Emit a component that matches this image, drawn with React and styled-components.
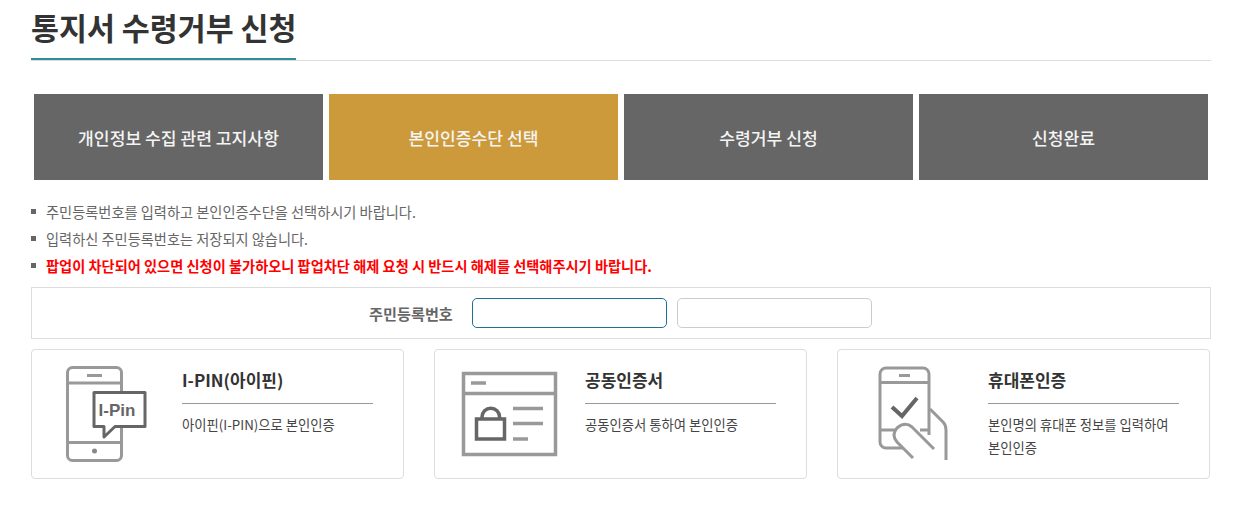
import styled, { createGlobalStyle } from 'styled-components';

const GlobalStyle = createGlobalStyle`
  html, body {
    margin: 0;
    padding: 0;
    background: #fff;
    font-family: "Noto Sans CJK KR", "Noto Sans", sans-serif;
  }
  * {
    box-sizing: border-box;
  }
`;

const Page = styled.div`
  width: 1249px;
  height: 507px;
  padding: 0 38px 0 31px;
  overflow: hidden;
`;
const Title = styled.div`
  height: 61px;
  border-bottom: 1px solid #ddd;
  h1 {
    display: inline-block;
    margin: 0;
    height: 60px;
    padding-top: 5px;
    border-bottom: 2px solid #2f8f96;
    font-size: 30.4px;
    line-height: 44px;
    font-weight: 700;
    color: #333;
  }
`;
const Steps = styled.ul`
  display: flex;
  gap: 6px;
  margin: 33px 0 0;
  padding: 0 0 0 3px;
  list-style: none;
`;
const Step = styled.li`
  width: 289px;
  height: 86px;
  display: flex;
  align-items: center;
  justify-content: center;
  background: ${props => (props.active ? '#cc9a3a' : '#666')};
  color: #f4f4f4;
  font-size: 17.15px;
  font-weight: 500;
`;
const Notices = styled.ul`
  margin: 18px 0 0;
  padding: 0;
  list-style: none;
`;
const Notice = styled.li`
  display: flex;
  align-items: center;
  height: 27px;
  font-size: 14.23px;
  color: ${props => (props.warn ? '#f00' : '#666')};
  font-weight: ${props => (props.warn ? 700 : 400)};
  &::before {
    content: '';
    width: 5px;
    height: 5px;
    margin-right: 10px;
    background: #666;
  }
`;
const IdBox = styled.div`
  display: flex;
  align-items: center;
  height: 52px;
  margin-top: 8px;
  padding-left: 337px;
  border: 1px solid #ddd;
  label {
    width: 103px;
    font-size: 15.2px;
    font-weight: 700;
    color: #666;
  }
`;
const IdInput = styled.input`
  width: 195px;
  height: 30px;
  margin-right: 10px;
  border: 1px solid ${props => (props.focused ? '#1f6f96' : '#ccc')};
  border-radius: 5px;
  background: #fff;
  outline: none;
`;
const Cards = styled.div`
  display: flex;
  gap: 30px;
  margin-top: 10px;
`;
const Card = styled.div`
  display: flex;
  width: 373px;
  height: 130px;
  border: 1px solid #ddd;
  border-radius: 4px;
  svg {
    flex: none;
    display: block;
  }
`;
const CardBody = styled.div`
  width: 191px;
  h3 {
    margin: 0;
    height: 54px;
    padding-top: 15px;
    border-bottom: 1px solid #999;
    font-size: 17px;
    line-height: 30px;
    font-weight: 700;
    color: #333;
  }
  p {
    margin: 9px 0 0;
    font-size: 13.33px;
    line-height: 23px;
    color: #444;
  }
`;

const PinIcon = () => (
  <svg width="150" height="128" viewBox="-7 0 150 128" fill="none" strokeWidth="3">
    <rect x="28.500" y="17.500" width="54" height="93" rx="5" stroke="#999" />
    <path d="M28 33h55M28 92.500h55M48 25.500h15" stroke="#999" />
    <circle cx="55.500" cy="101" r="2.500" fill="#888" />
    <path d="M55 42.500h51v34H76L65 87V76.500H55z" fill="#fff" stroke="#666" strokeLinejoin="round" />
    <text x="78" y="66" textAnchor="middle" fontFamily="Liberation Sans, sans-serif" fontSize="17" fontWeight="700" fill="#666" stroke="none">I-Pin</text>
  </svg>
);

const CertIcon = () => (
  <svg width="150" height="128" viewBox="-9 0 150 128" fill="none" strokeWidth="3.500">
    <rect x="19.500" y="23.500" width="92" height="81" stroke="#999" />
    <path d="M19 43.500h92M27 33h15M69 58.500h30M69 73.500h30M69 89h15" stroke="#999" />
    <rect x="32.500" y="69" width="28" height="20" stroke="#666" />
    <path d="M38 69v-2a8.800 8.800 0 0 1 17.600 0v2" stroke="#666" />
  </svg>
);

const PhoneIcon = () => (
  <svg width="150" height="128" viewBox="-22 0 150 128" fill="none" strokeWidth="3">
    <path d="M43 98H26a6 6 0 0 1-6-6V24a6 6 0 0 1 6-6h37a6 6 0 0 1 6 6v61" stroke="#999" />
    <path d="M20 32.500h49M20 80h15M60 80h9M39 25.500h11" stroke="#999" />
    <path d="M32 57l10 9 15-18" stroke="#666" strokeWidth="4" />
    <path d="M70 59l13 13q3 3 3 8v30M53 108L37 92q-6-7 0-14 8-7 15-1l22 22" stroke="#999" />
  </svg>
);

function App() {
  return (
    <Page>
      <GlobalStyle />
      <Title>
        <h1>통지서 수령거부 신청</h1>
      </Title>
      <Steps>
        <Step>개인정보 수집 관련 고지사항</Step>
        <Step active>본인인증수단 선택</Step>
        <Step>수령거부 신청</Step>
        <Step>신청완료</Step>
      </Steps>
      <Notices>
        <Notice>주민등록번호를 입력하고 본인인증수단을 선택하시기 바랍니다.</Notice>
        <Notice>입력하신 주민등록번호는 저장되지 않습니다.</Notice>
        <Notice warn>팝업이 차단되어 있으면 신청이 불가하오니 팝업차단 해제 요청 시 반드시 해제를 선택해주시기 바랍니다.</Notice>
      </Notices>
      <IdBox>
        <label>주민등록번호</label>
        <IdInput focused />
        <IdInput />
      </IdBox>
      <Cards>
        <Card>
          <PinIcon />
          <CardBody>
            <h3>I-PIN(아이핀)</h3>
            <p>아이핀(I-PIN)으로 본인인증</p>
          </CardBody>
        </Card>
        <Card>
          <CertIcon />
          <CardBody>
            <h3>공동인증서</h3>
            <p>공동인증서 통하여 본인인증</p>
          </CardBody>
        </Card>
        <Card>
          <PhoneIcon />
          <CardBody>
            <h3>휴대폰인증</h3>
            <p>본인명의 휴대폰 정보를 입력하여 본인인증</p>
          </CardBody>
        </Card>
      </Cards>
    </Page>
  );
}

export default App;
